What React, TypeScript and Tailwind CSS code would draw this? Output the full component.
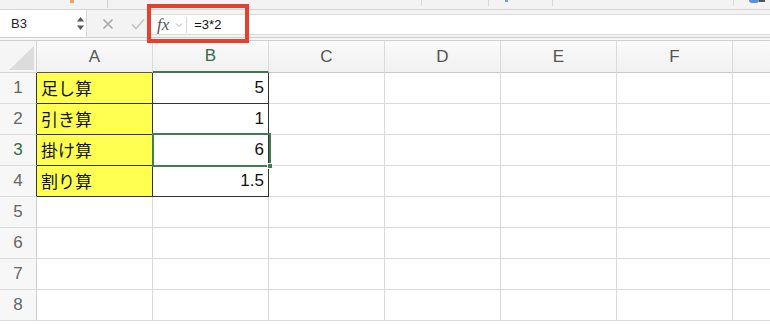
import React from "react";

const COLS = ["A", "B", "C", "D", "E", "F", "G"];
const DATA: Record<number, [string, string]> = {
  1: ["足し算", "5"],
  2: ["引き算", "1"],
  3: ["掛け算", "6"],
  4: ["割り算", "1.5"],
};

const font = {
  fontFamily: '"Liberation Sans", "Noto Sans CJK JP", sans-serif',
};

export default function App() {
  const rows = [1, 2, 3, 4, 5, 6, 7, 8];
  return (
    <div
      className="relative w-[770px] h-[324px] overflow-hidden bg-white"
      style={font}
    >
      {/* toolbar remnant */}
      <div className="relative h-[10px] bg-[#f3f3f3] border-b border-[#d4d4d4]">
        <div className="absolute left-[70px] top-0 w-[4px] h-[3px] bg-[#f0a060]" />
        <div className="absolute left-[107px] top-0 w-px h-[8px] bg-[#d0d0d0]" />
        <div className="absolute left-[421px] top-0 w-px h-[6px] bg-[#d8d8d8]" />
        <div className="absolute left-[488px] top-0 w-px h-[6px] bg-[#d8d8d8]" />
        <div className="absolute left-[505px] top-0 w-[3px] h-[2px] bg-[#6aa0e0]" />
        <div className="absolute left-[552px] top-0 w-px h-[6px] bg-[#d8d8d8]" />
        <div className="absolute left-[733px] top-0 w-px h-[6px] bg-[#d8d8d8]" />
        <div className="absolute left-[749px] top-0 w-[10px] h-[3px] bg-[#5b8fd6] rounded-b" />
        <div className="absolute left-[759px] top-0 w-[6px] h-[2px] bg-[#555]" />
      </div>

      {/* formula bar */}
      <div className="flex h-[27px] bg-[#f3f3f3]">
        <div className="relative w-[87px] h-full bg-white border-r border-[#d8d8d8] flex items-center">
          <span className="pl-[11px] text-[13px] text-[#222]">B3</span>
          <svg
            className="absolute left-[76px] top-[6px]"
            width="9"
            height="15"
            viewBox="0 0 9 15"
          >
            <path d="M4.5 1 L8 5.5 L1 5.5 Z" fill="#555" />
            <path d="M4.5 14 L8 9.5 L1 9.5 Z" fill="#555" />
          </svg>
        </div>
        <div className="w-[63px] flex items-center">
          <svg className="ml-[15px]" width="12" height="12" viewBox="0 0 12 12">
            <path d="M1.5 1.5 L10.5 10.5 M10.5 1.5 L1.5 10.5" stroke="#a8a8a8" strokeWidth="1.6" />
          </svg>
          <svg className="ml-[17px]" width="14" height="12" viewBox="0 0 14 12">
            <path d="M1 6.5 L5 10.5 L13 1.5" stroke="#c4c4c4" strokeWidth="1.6" fill="none" />
          </svg>
        </div>
        <div className="flex-1 mt-[4px] h-[21px] bg-white border-t border-b border-[#dcdcdc] flex items-center">
          <span
            className="ml-[7px] text-[17px] italic text-[#555]"
            style={{ fontFamily: '"Liberation Serif", serif' }}
          >
            fx
          </span>
          <svg className="ml-[6px]" width="8" height="6" viewBox="0 0 8 6">
            <path d="M1 1.5 L4 4.5 L7 1.5" stroke="#b0b0b0" strokeWidth="1" fill="none" />
          </svg>
          <div className="ml-[3px] w-px h-[16px] bg-[#d8d8d8]" />
          <span className="ml-[7px] text-[13px] text-[#111]">=3*2</span>
        </div>
      </div>

      {/* double separator */}
      <div className="h-[4px] border-t border-b border-[#cfcfcf] bg-[#f7f7f7]" />

      {/* column headers */}
      <div className="flex h-[32px]">
        <div className="relative w-[37px] shrink-0 h-full bg-[#f5f5f5] border-r border-b border-[#d4d4d4]">
          <svg className="absolute left-0 top-0" width="36" height="31" viewBox="0 0 36 31">
            <path d="M34 5 L34 29 L9 29 Z" fill="#dcdcdc" />
          </svg>
        </div>
        {COLS.map((c) => (
          <div
            key={c}
            className={
              "w-[116px] shrink-0 h-full flex items-center justify-center text-[17px] bg-gradient-to-b from-[#fafafa] to-[#f1f1f1] border-r border-[#dadada] " +
              (c === "B"
                ? "text-[#2f6e46] border-b-2 border-b-[#3d7a50]"
                : c === "A"
                ? "text-[#555] border-b border-b-[#555]"
                : "text-[#555] border-b border-b-[#c8c8c8]")
            }
          >
            {c === "G" ? "" : c}
          </div>
        ))}
      </div>

      {/* rows */}
      {rows.map((r) => {
        const d = DATA[r];
        const framed = !!d;
        return (
          <div key={r} className="flex h-[31px]">
            <div
              className={
                "w-[37px] shrink-0 h-full flex items-center justify-center text-[17px] bg-[#f7f7f7] border-b border-[#dcdcdc] border-r " +
                (framed ? "border-r-[#333] " : "border-r-[#d0d0d0] ") +
                (r === 3 ? "text-[#2f6e46]" : "text-[#666]")
              }
            >
              {r}
            </div>
            {COLS.map((c, i) => {
              if (framed && i === 0) {
                return (
                  <div
                    key={c}
                    className="w-[116px] shrink-0 h-full bg-[#ffff52] border-r border-b border-[#333] flex items-center pl-[4px] text-[17px] text-[#111]"
                    style={{ fontFamily: '"Noto Sans CJK JP", sans-serif' }}
                  >
                    {d[0]}
                  </div>
                );
              }
              if (framed && i === 1) {
                return (
                  <div
                    key={c}
                    className="w-[116px] shrink-0 h-full bg-white border-r border-b border-[#333] flex items-center justify-end pr-[4px] text-[17px] text-[#111]"
                  >
                    {d[1]}
                  </div>
                );
              }
              return (
                <div
                  key={c}
                  className="w-[116px] shrink-0 h-full border-r border-b border-[#dadada]"
                />
              );
            })}
          </div>
        );
      })}

      {/* selection B3 */}
      <div className="absolute left-[152px] top-[133px] w-[119px] h-[34px] border-2 border-[#3f7d52]" />
      <div className="absolute left-[267px] top-[163px] w-[6px] h-[6px] bg-[#3f7d52] border border-white" />

      {/* red annotation box */}
      <div className="absolute left-[147px] top-[4px] w-[102px] h-[39px] border-[4px] border-[#e8402a]" />
    </div>
  );
}
